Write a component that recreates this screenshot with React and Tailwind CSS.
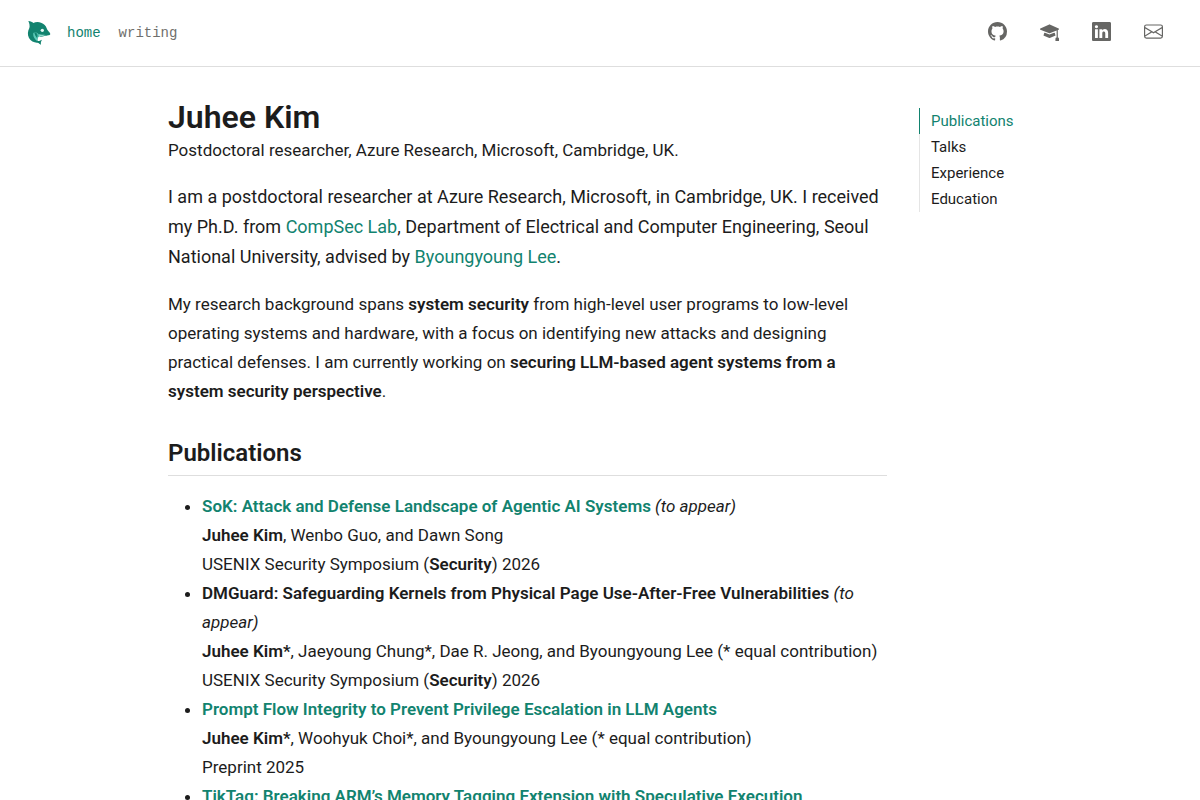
import { BsEnvelope, BsGithub, BsLinkedin, BsMortarboardFill } from 'react-icons/bs'

const socials = [
  { label: 'GitHub', href: '#github', icon: BsGithub },
  { label: 'Google Scholar', href: '#scholar', icon: BsMortarboardFill },
  { label: 'LinkedIn', href: '#linkedin', icon: BsLinkedin },
  { label: 'Email', href: '#email', icon: BsEnvelope },
]

const sections = ['Publications', 'Talks', 'Experience', 'Education']

const publications = [
  {
    title: 'SoK: Attack and Defense Landscape of Agentic AI Systems',
    href: '#sok',
    note: '(to appear)',
    me: 'Juhee Kim',
    authors: ', Wenbo Guo, and Dawn Song',
    venue: 'USENIX Security Symposium',
    short: 'Security',
    year: 2026,
  },
  {
    title: 'DMGuard: Safeguarding Kernels from Physical Page Use-After-Free Vulnerabilities',
    note: '(to appear)',
    me: 'Juhee Kim*',
    authors: ', Jaeyoung Chung*, Dae R. Jeong, and Byoungyoung Lee (* equal contribution)',
    venue: 'USENIX Security Symposium',
    short: 'Security',
    year: 2026,
  },
  {
    title: 'Prompt Flow Integrity to Prevent Privilege Escalation in LLM Agents',
    href: '#pfi',
    me: 'Juhee Kim*',
    authors: ', Woohyuk Choi*, and Byoungyoung Lee (* equal contribution)',
    venue: 'Preprint',
    year: 2025,
  },
  {
    title: 'TikTag: Breaking ARM’s Memory Tagging Extension with Speculative Execution',
    href: '#tiktag',
  },
]

const DolphinLogo = () => (
  <svg viewBox="0 0 72 72" className="size-6" aria-hidden="true">
    <path
      fill="#12836f"
      d="M4 0C11 0 16 3 19 6C25 3 34 2 42 5C51 8 57 14 59 22C60 29 69 33 70 39C69 44 60 43 52 45C46 47 41 48 36 46C32 50 30 56 32 60C35 61 39 59 45 56C42 61 41 64 42 71C38 70 36 65 31 65C23 66 11 60 6 51C1 42 2 30 7 21C9 15 7 7 4 0Z"
    />
    <path fill="#5ecbb9" d="M19 36C24 33 31 35 35 40L36 46C32 50 30 55 31 60C24 56 17 46 19 36Z" />
    <path fill="#12836f" d="M22 34C31 35 34 43 30 51C26 47 23 42 22 34Z" />
    <path fill="#8fdccf" d="M35 40C41 42 49 41 56 42C50 44 45 46 40 46C37 46 35 44 35 40Z" />
    <circle cx="46" cy="28" r="5" fill="#e3f7f3" />
  </svg>
)

const Header = () => (
  <header className="flex items-center justify-between border-b border-[#dedede] pl-[27px] pr-[37px] h-[67px]">
    <nav className="flex items-center font-['Liberation_Mono',monospace] text-sm">
      <a href="#home" aria-label="Juhee Kim">
        <DolphinLogo />
      </a>
      <a href="#home" className="ml-4 text-[#12836f]">home</a>
      <a href="#writing" className="ml-[18px] text-[#6f6f6c]">writing</a>
    </nav>
    <div className="flex items-center gap-[33px] pb-1 text-[#666664]">
      {socials.map(({ label, href, icon: Icon }) => (
        <a key={label} href={href} aria-label={label}>
          <Icon size={19} />
        </a>
      ))}
    </div>
  </header>
)

const Publication = ({ pub }) => (
  <li>
    {pub.href ? (
      <a href={pub.href} className="font-semibold text-[#12836f]">{pub.title}</a>
    ) : (
      <strong className="font-semibold">{pub.title}</strong>
    )}
    {pub.note && <em> {pub.note}</em>}
    {pub.me && (
      <p>
        <strong className="font-semibold">{pub.me}</strong>
        {pub.authors}
      </p>
    )}
    {pub.venue && (
      <p>
        {pub.venue}{' '}
        {pub.short && (
          <>
            (<strong className="font-semibold">{pub.short}</strong>){' '}
          </>
        )}
        {pub.year}
      </p>
    )}
  </li>
)

const App = () => {
  return (
    <div className="h-screen overflow-y-auto bg-white font-['Roboto',sans-serif] text-[17px] text-[#1c1c1c] [scrollbar-width:none]">
      <Header />
      <div className="mx-auto flex max-w-[864px] gap-8 pt-[30px]">
        <main className="min-w-0 flex-1">
          <h1 className="text-[32px] font-semibold leading-10">Juhee Kim</h1>
          <p className="leading-[26px]">Postdoctoral researcher, Azure Research, Microsoft, Cambridge, UK.</p>

          <p className="mt-[19px] text-lg leading-[30px]">
            I am a postdoctoral researcher at Azure Research, Microsoft, in Cambridge, UK. I received my Ph.D. from{' '}
            <a href="#compsec" className="text-[#12836f]">CompSec Lab</a>, Department of Electrical and Computer
            Engineering, Seoul National University, advised by{' '}
            <a href="#advisor" className="text-[#12836f]">Byoungyoung Lee</a>.
          </p>

          <p className="mt-[18px] leading-[29px]">
            My research background spans <strong className="font-semibold">system security</strong> from high-level
            user programs to low-level operating systems and hardware, with a focus on identifying new attacks and
            designing practical defenses. I am currently working on{' '}
            <strong className="font-semibold">
              securing LLM-based agent systems from a system security perspective
            </strong>
            .
          </p>

          <h2
            id="publications"
            className="mt-8 border-b border-[#dedede] pb-[7px] text-2xl font-semibold leading-[30px]"
          >
            Publications
          </h2>
          <ul className="mt-4 list-disc pl-[34px] leading-[29px]">
            {publications.map((pub) => (
              <Publication key={pub.title} pub={pub} />
            ))}
          </ul>
        </main>

        <aside className="w-[113px] shrink-0 pt-[11px]">
          <nav aria-label="Sections" className="flex flex-col text-[15px] leading-[26px]">
            {sections.map((section, index) => (
              <a
                key={section}
                href={`#${section.toLowerCase()}`}
                className={
                  index === 0
                    ? 'border-l border-[#12836f] pl-[11px] text-[#12836f]'
                    : 'border-l border-[#e5e5e5] pl-[11px]'
                }
              >
                {section}
              </a>
            ))}
          </nav>
        </aside>
      </div>
    </div>
  )
}

export default App
